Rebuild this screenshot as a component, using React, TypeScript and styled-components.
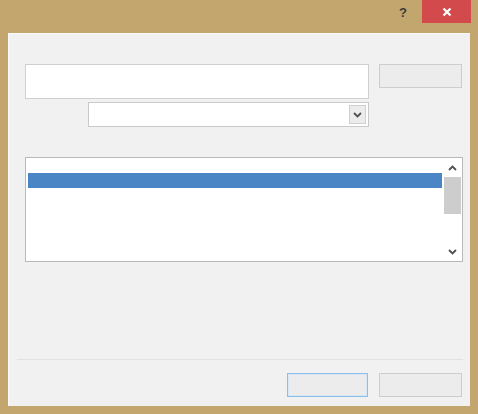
import styled, { createGlobalStyle } from 'styled-components';

const Global = createGlobalStyle`
  html, body { margin: 0; padding: 0; background: #c2a66e; }
  body { font-family: "Segoe UI", "Liberation Sans", Arial, sans-serif; }
`;

// Рамка окна
const Frame = styled.div`
  width: 478px;
  height: 414px;
  background: #c2a66e;
  display: flex;
  flex-direction: column;
  box-sizing: border-box;
  padding: 0 8px 8px 8px;
`;

const TitleBar = styled.div`
  height: 33px;
  display: flex;
  justify-content: flex-end;
  align-items: flex-start;
  flex-shrink: 0;
`;

const HelpButton = styled.div`
  width: 30px;
  height: 24px;
  margin-right: 4px;
  display: flex;
  align-items: center;
  justify-content: center;
  font-size: 13px;
  font-weight: 700;
  color: #3b3b3b;
  font-family: "Liberation Sans", Arial, sans-serif;
`;

const CloseButton = styled.div`
  width: 49px;
  height: 23px;
  margin-right: -1px;
  background: #d34a4d;
  display: flex;
  align-items: center;
  justify-content: center;
`;

// Клиентская область
const Client = styled.div`
  flex: 1;
  background: #f1f1f1;
  border-top: 1px solid #fafafa;
  border-left: 1px solid #fbfbfb;
  display: flex;
  flex-direction: column;
  box-sizing: border-box;
  padding: 30px 7px 9px 7px;
`;

const Body = styled.div`
  padding-left: 9px;
  display: flex;
  flex-direction: column;
  flex: 1;
`;

const TopRow = styled.div`
  display: flex;
  gap: 10px;
  align-items: flex-start;
`;

const TextBox = styled.div`
  width: 344px;
  height: 35px;
  box-sizing: border-box;
  background: #fff;
  border: 1px solid #cfcfcf;
`;

const Button = styled.div<{ $focused?: boolean }>`
  width: ${(p) => (p.$focused ? '81px' : '83px')};
  height: 24px;
  box-sizing: border-box;
  background: #ececec;
  border: 1px solid ${(p) => (p.$focused ? '#8fbde6' : '#cdcdcd')};
  box-shadow: ${(p) => (p.$focused ? 'inset 0 0 0 1px #d6e8f7' : 'none')};
`;

const Combo = styled.div`
  margin: 3px 0 0 63px;
  width: 281px;
  height: 25px;
  box-sizing: border-box;
  background: #fff;
  border: 1px solid #c9c9c9;
  display: flex;
  justify-content: flex-end;
  padding: 2px;
`;

const ComboArrow = styled.div`
  width: 17px;
  height: 19px;
  background: #ececec;
  border: 1px solid #cfcfcf;
  box-sizing: border-box;
  display: flex;
  align-items: center;
  justify-content: center;
`;

const ListBox = styled.div`
  margin-top: 30px;
  width: 438px;
  height: 105px;
  box-sizing: border-box;
  background: #fff;
  border: 1px solid #b9b9b9;
  display: flex;
  padding: 1px;
`;

const ListItems = styled.div`
  flex: 1;
  padding-top: 14px;
`;

const SelectedRow = styled.div`
  height: 15px;
  margin: 0 2px 0 1px;
  background: #4a85c6;
`;

const ScrollBar = styled.div`
  width: 17px;
  display: flex;
  flex-direction: column;
  align-items: center;
`;

const ScrollArrow = styled.div`
  height: 17px;
  display: flex;
  align-items: center;
  justify-content: center;
`;

const ScrollTrack = styled.div`
  flex: 1;
  width: 100%;
  padding-top: 1px;
`;

const Thumb = styled.div`
  height: 37px;
  width: 100%;
  background: #cdcdcd;
`;

const Separator = styled.div`
  height: 1px;
  background: #e1e1e1;
  margin: 0 0 13px 1px;
`;

const Footer = styled.div`
  display: flex;
  justify-content: flex-end;
  gap: 11px;
  padding-right: 1px;
`;

const Chevron = ({ up }: { up?: boolean }) => (
  <svg width="9" height="6" viewBox="0 0 9 6">
    <path
      d={up ? 'M1 5 L4.5 1.5 L8 5' : 'M1 1 L4.5 4.5 L8 1'}
      fill="none"
      stroke="#505050"
      strokeWidth="1.8"
    />
  </svg>
);

export default function App() {
  return (
    <>
      <Global />
      <Frame>
        <TitleBar>
          <HelpButton>?</HelpButton>
          <CloseButton>
            <svg width="10" height="10" viewBox="0 0 10 10">
              <path d="M1.5 1.5 L8.5 8.5 M8.5 1.5 L1.5 8.5" stroke="#fff" strokeWidth="2.2" />
            </svg>
          </CloseButton>
        </TitleBar>
        <Client>
          <Body>
            <TopRow>
              <TextBox />
              <Button />
            </TopRow>
            <Combo>
              <ComboArrow>
                <Chevron />
              </ComboArrow>
            </Combo>
            <ListBox>
              <ListItems>
                <SelectedRow />
              </ListItems>
              <ScrollBar>
                <ScrollArrow>
                  <Chevron up />
                </ScrollArrow>
                <ScrollTrack>
                  <Thumb />
                </ScrollTrack>
                <ScrollArrow>
                  <Chevron />
                </ScrollArrow>
              </ScrollBar>
            </ListBox>
          </Body>
          <Separator />
          <Footer>
            <Button $focused />
            <Button />
          </Footer>
        </Client>
      </Frame>
    </>
  );
}
